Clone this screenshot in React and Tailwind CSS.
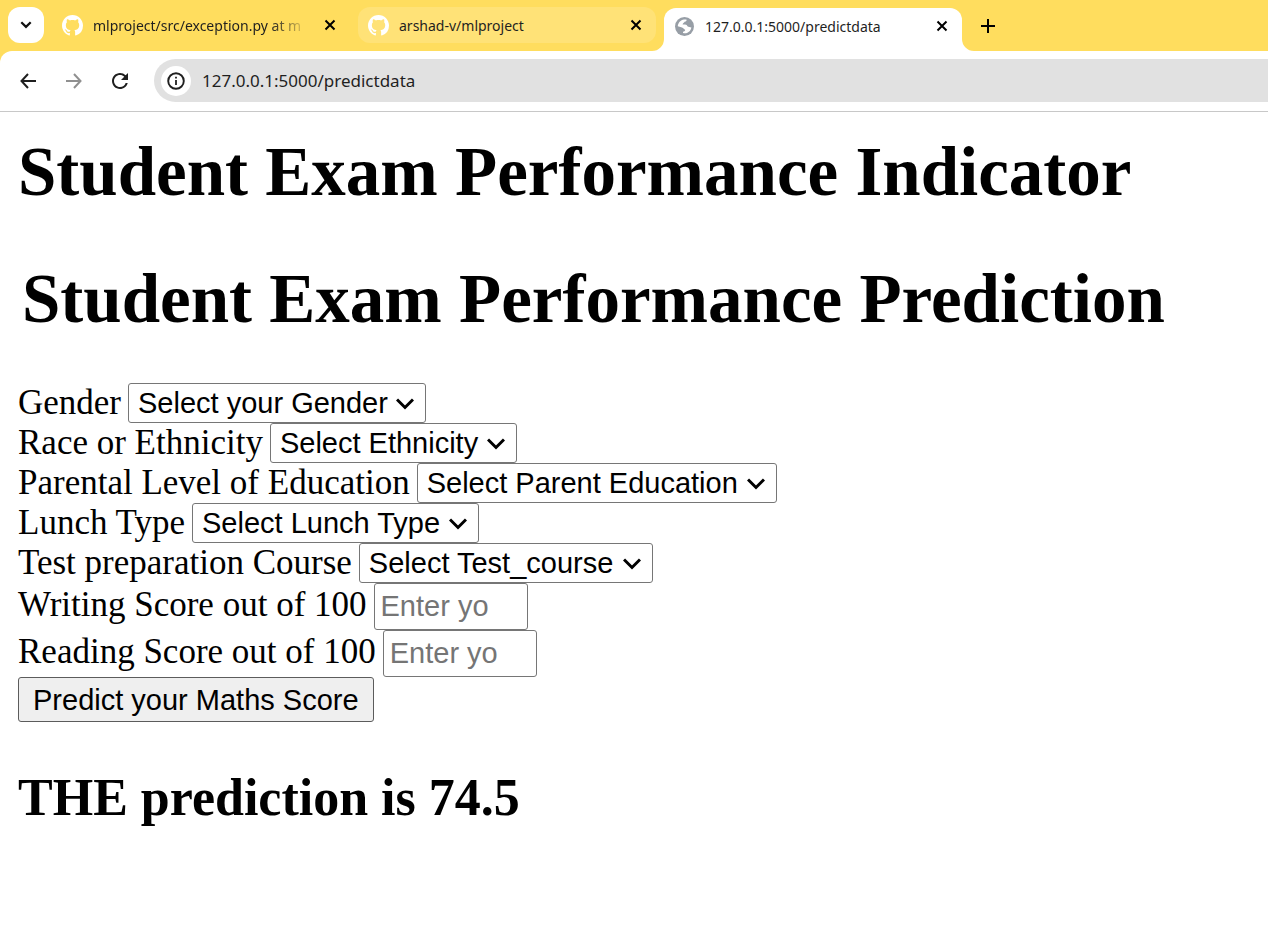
import { MdRefresh } from "react-icons/md";

const GithubMark = () => (
  <svg viewBox="0 0 16 16" className="size-[21px] shrink-0" fill="#fff" aria-hidden="true">
    <path d="M8 0C3.58 0 0 3.58 0 8c0 3.54 2.29 6.53 5.47 7.59.4.07.55-.17.55-.38 0-.19-.01-.82-.01-1.49-2.01.37-2.53-.49-2.69-.94-.09-.23-.48-.94-.82-1.13-.28-.15-.68-.52-.01-.53.63-.01 1.08.58 1.23.82.72 1.21 1.87.87 2.33.66.07-.52.28-.87.51-1.07-1.78-.2-3.64-.89-3.64-3.95 0-.87.31-1.59.82-2.15-.08-.2-.36-1.02.08-2.12 0 0 .67-.21 2.2.82.64-.18 1.32-.27 2-.27s1.36.09 2 .27c1.53-1.04 2.2-.82 2.2-.82.44 1.1.16 1.92.08 2.12.51.56.82 1.27.82 2.15 0 3.07-1.87 3.75-3.65 3.95.29.25.54.73.54 1.48 0 1.07-.01 1.93-.01 2.2 0 .21.15.46.55.38A8.01 8.01 0 0 0 16 8c0-4.42-3.58-8-8-8Z" />
  </svg>
);

const Globe = () => (
  <svg viewBox="0 0 19 19" className="size-[19px] shrink-0" aria-hidden="true">
    <circle cx="9.5" cy="9.5" r="9.5" fill="#979ea6" />
    <path
      d="M11.4 2.4 C12 3.6 11.2 4.6 9.6 4.8 C9.2 6.2 7.6 6 7.6 7.6 C9.6 7.6 12 7.4 12.4 9.2 C13.6 10.4 15 9.8 16.4 10.6 C16 13.2 14.2 15.2 12 16 C10.6 16.4 9.4 16.4 8 16 L8 14.8 C9.4 14.6 10.6 13.8 10 12.6 C8.6 12.4 8.6 11 7 10.6 L2.8 9.2 C3 5.8 5.6 3 9 2.4 Z"
      fill="#fff"
    />
  </svg>
);

const Close = () => (
  <svg viewBox="0 0 12 12" className="size-3" fill="none" stroke="currentColor" strokeWidth="2" aria-hidden="true">
    <path d="M1.5 1.5 10.5 10.5M10.5 1.5 1.5 10.5" />
  </svg>
);

const Flare = ({ className }) => (
  <svg viewBox="0 0 12 12" className={`absolute bottom-0 size-3 ${className}`} aria-hidden="true">
    <path d="M12 0V12H0A12 12 0 0 0 12 0Z" fill="#fff" />
  </svg>
);

function Tab({ icon, title, active, hovered, fade }) {
  const shade = active
    ? "bg-white rounded-t-xl h-[43px] pb-[7px]"
    : hovered
      ? "bg-[#ffe277] rounded-xl h-9 mb-2"
      : "h-9 mb-2";
  return (
    <div className={`relative flex w-[298px] items-center pl-[10px] pr-[14px] ${shade}`}>
      {active && <Flare className="-left-3" />}
      {active && <Flare className="-right-3 -scale-x-100" />}
      <span className="flex w-[31px] shrink-0">
        <span className="flex w-[21px] justify-center">{icon}</span>
      </span>
      <span
        className={`w-[216px] shrink-0 overflow-hidden whitespace-nowrap pt-0.5 text-sm text-[#1f1f1f] ${
          fade ? "[mask-image:linear-gradient(to_right,black_82%,transparent)]" : ""
        }`}
      >
        {title}
      </span>
      <button type="button" aria-label="Close tab" className="ml-auto text-black">
        <Close />
      </button>
    </div>
  );
}

function SelectField({ id, label, placeholder }) {
  return (
    <div className="flex h-10 items-center gap-[7px]">
      <label htmlFor={id}>{label}</label>
      <div className="relative font-['Liberation_Sans',Arial,sans-serif]">
        <select
          id={id}
          className="block h-10 appearance-none rounded-[3px] border border-[#767676] bg-white pl-[9px] pr-[37px] text-[29px] leading-9 text-black"
        >
          <option>{placeholder}</option>
        </select>
        <svg
          viewBox="0 0 18 12"
          className="pointer-events-none absolute right-[12px] top-[15px] h-3 w-[18px]"
          fill="none"
          stroke="#000"
          strokeWidth="3"
          aria-hidden="true"
        >
          <path d="M1 1.5 9 9.5 17 1.5" />
        </svg>
      </div>
    </div>
  );
}

function ScoreField({ id, label }) {
  return (
    <div className="flex h-[47px] items-start gap-[7px]">
      <label htmlFor={id} className="leading-[44px]">
        {label}
      </label>
      <input
        id={id}
        type="text"
        inputMode="numeric"
        placeholder="Enter yo"
        className="h-[47px] w-[154px] rounded-[3px] border border-[#767676] bg-white px-[6px] font-['Liberation_Sans',Arial,sans-serif] text-[29px] placeholder:text-[#757575]"
      />
    </div>
  );
}

export default function App() {
  return (
    <div className="min-h-screen overflow-hidden bg-white font-['Liberation_Serif','Times_New_Roman',serif] text-black">
      <header className="bg-[#ffdd5e] font-['Noto_Sans','Segoe_UI',sans-serif]">
        <div className="flex h-[51px] items-end gap-2 pl-2">
          <button
            type="button"
            aria-label="Search tabs"
            className="mb-2 flex size-9 items-center justify-center rounded-xl bg-white"
          >
            <svg viewBox="0 0 12 8" className="h-2 w-3" fill="none" stroke="#111" strokeWidth="2.2" aria-hidden="true">
              <path d="M1.3 1.2 6 5.9 10.7 1.2" />
            </svg>
          </button>
          <Tab icon={<GithubMark />} title="mlproject/src/exception.py at m" fade />
          <Tab icon={<GithubMark />} title="arshad-v/mlproject" hovered />
          <Tab icon={<Globe />} title="127.0.0.1:5000/predictdata" active />
          <button type="button" aria-label="New tab" className="mb-[7px] flex size-9 items-center justify-center">
            <svg viewBox="0 0 14 14" className="size-[14px]" stroke="#000" strokeWidth="2" aria-hidden="true">
              <path d="M7 0V14M0 7H14" />
            </svg>
          </button>
        </div>
        <div className="flex h-[61px] items-center rounded-tl-xl border-b border-[#c8c8c8] bg-white pb-px pl-5">
          <div className="flex items-center gap-[30px]">
            <button type="button" aria-label="Back">
              <svg viewBox="0 0 16 16" className="size-4" fill="none" stroke="#1f1f1f" strokeWidth="2" aria-hidden="true">
                <path d="M8 1 1.5 8 8 15M1.5 8H16" />
              </svg>
            </button>
            <button type="button" aria-label="Forward">
              <svg viewBox="0 0 16 16" className="size-4" fill="none" stroke="#909090" strokeWidth="2" aria-hidden="true">
                <path d="M8 1 14.5 8 8 15M14.5 8H0" />
              </svg>
            </button>
            <button type="button" aria-label="Reload" className="-mx-1">
              <MdRefresh className="size-6 text-[#1f1f1f]" />
            </button>
          </div>
          <div className="ml-[26px] flex h-[43px] grow items-center gap-[11px] rounded-l-full bg-[#e1e1e1] pl-[7px]">
            <button
              type="button"
              aria-label="Site information"
              className="flex size-[30px] items-center justify-center rounded-full bg-white"
            >
              <svg viewBox="0 0 18 18" className="size-[18px]" fill="none" stroke="#1f1f1f" aria-hidden="true">
                <circle cx="9" cy="9" r="7.8" strokeWidth="1.9" />
                <path d="M9 8V13M9 4.8V6.6" strokeWidth="1.8" />
              </svg>
            </button>
            <input
              aria-label="Address"
              defaultValue="127.0.0.1:5000/predictdata"
              className="grow bg-transparent text-[17px] text-[#1f1f1f] outline-none"
            />
          </div>
        </div>
      </header>

      <main className="px-[18px] pt-5">
        <h1 className="text-[69px] font-bold leading-[80px]">Student Exam Performance Indicator</h1>
        <form className="pt-[47px]">
          <h1 className="pl-1 text-[69px] font-bold leading-[80px]">Student Exam Performance Prediction</h1>
          <div className="pt-11 text-[35px] leading-10">
            <SelectField id="gender" label="Gender" placeholder="Select your Gender" />
            <SelectField id="ethnicity" label="Race or Ethnicity" placeholder="Select Ethnicity" />
            <SelectField id="education" label="Parental Level of Education" placeholder="Select Parent Education" />
            <SelectField id="lunch" label="Lunch Type" placeholder="Select Lunch Type" />
            <SelectField id="course" label="Test preparation Course" placeholder="Select Test_course" />
            <ScoreField id="writing" label="Writing Score out of 100" />
            <ScoreField id="reading" label="Reading Score out of 100" />
            <button
              type="button"
              className="block h-[45px] rounded-[3px] border border-[#5c5c5c] bg-[#efefef] px-[14px] font-['Liberation_Sans',Arial,sans-serif] text-[29px] leading-10"
            >
              Predict your Maths Score
            </button>
          </div>
        </form>
        <h2 className="pt-[46px] text-[52px] font-bold leading-[60px]">THE prediction is 74.5</h2>
      </main>
    </div>
  );
}
